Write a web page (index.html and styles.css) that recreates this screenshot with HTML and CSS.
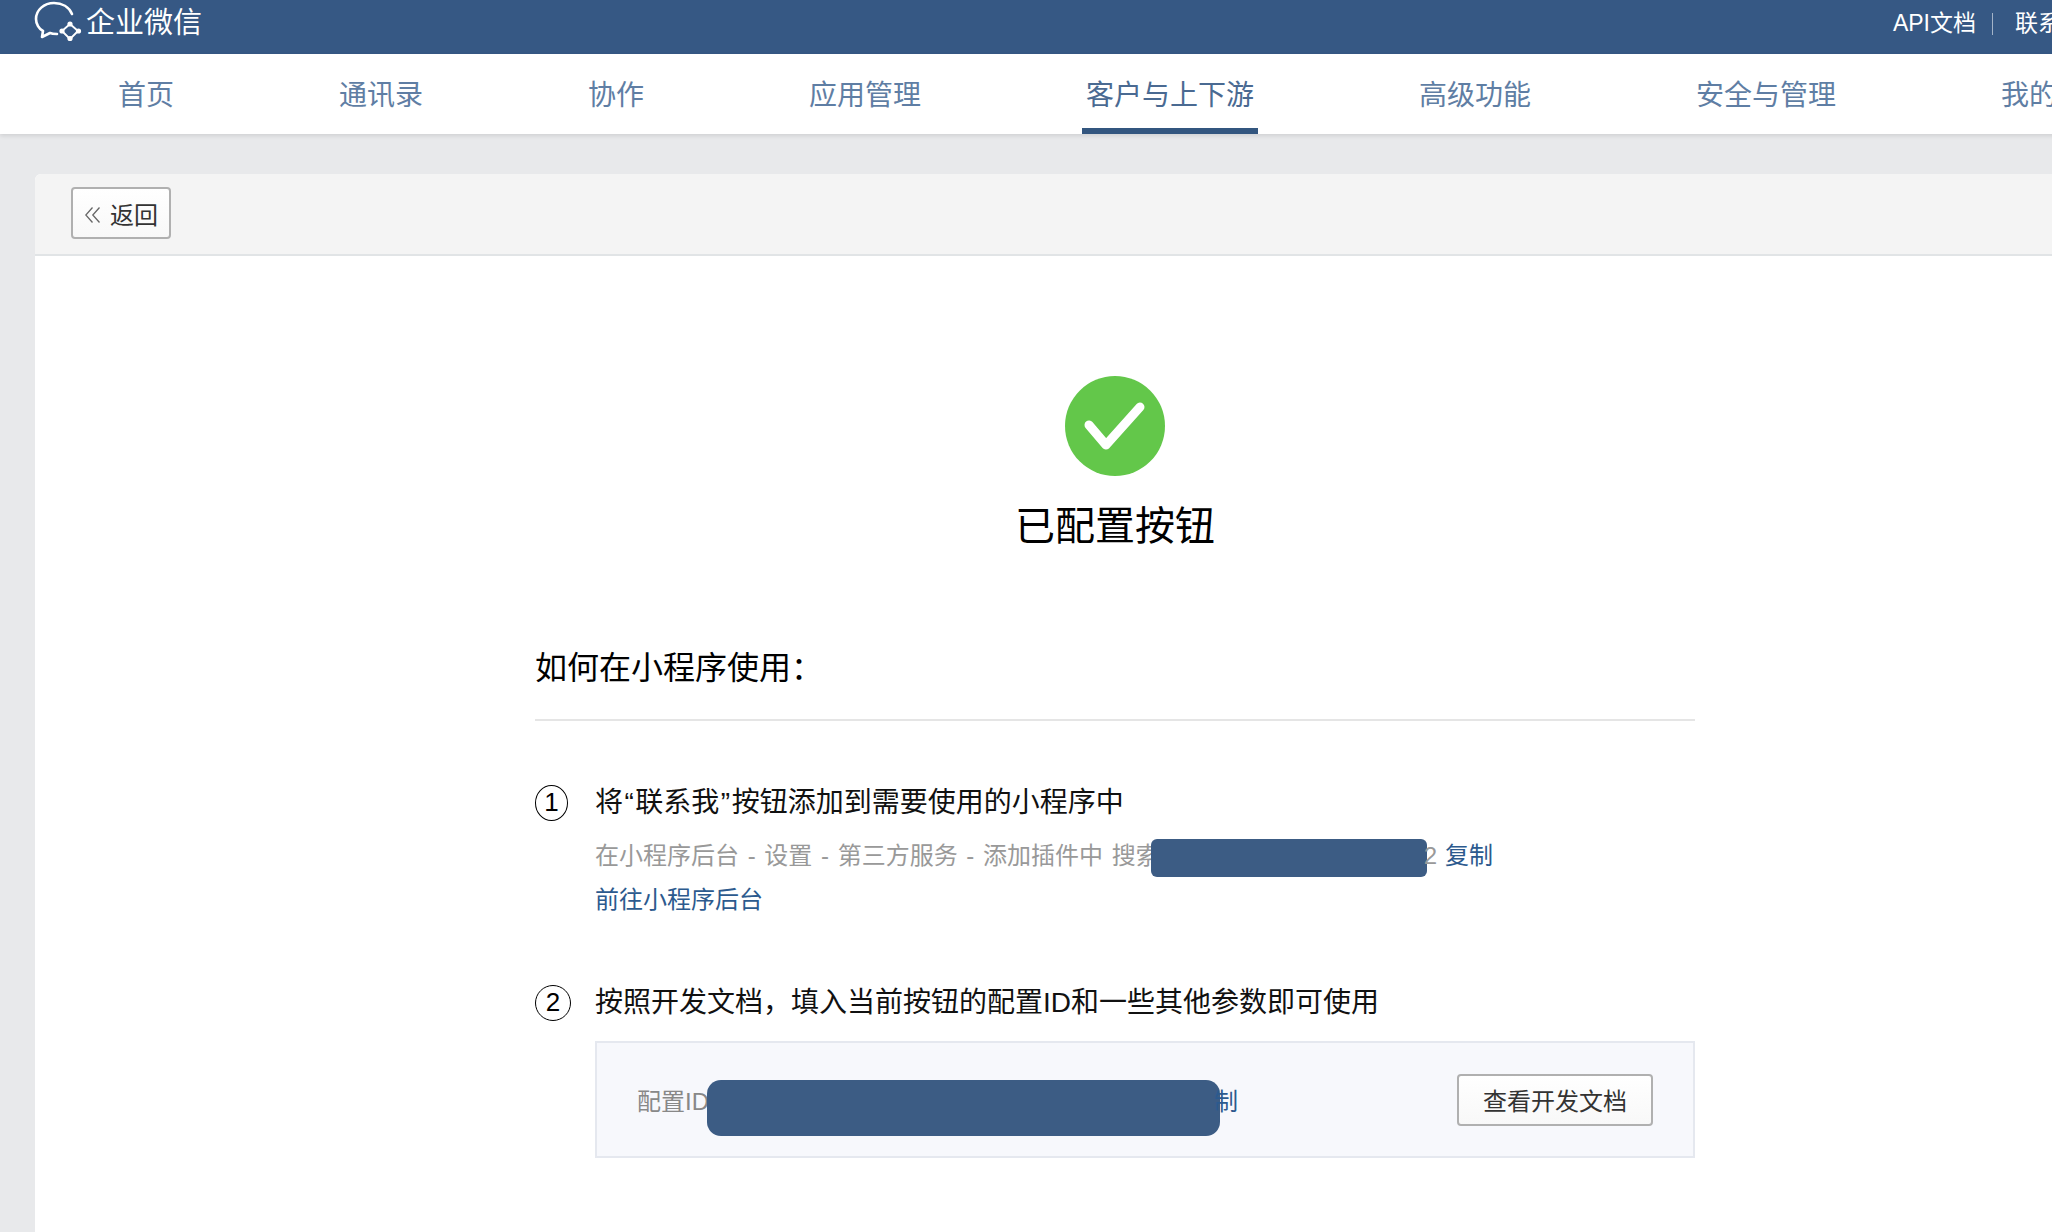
FILE: index.html
```html
<!DOCTYPE html>
<html lang="zh-CN">
<head>
<meta charset="utf-8">
<title>企业微信</title>
<link rel="stylesheet" href="styles.css">
</head>
<body>
<div class="page">
  <header class="topbar">
    <a class="brand">
      <svg class="brand-icon" viewBox="0 0 50 42" width="50" height="42" aria-hidden="true">
        <path class="logo-line" d="M39 14C36 7 29 3 21 3 11 3 3 10 3 19c0 5 3 10 7 12l-1 6 8-4c2 1 5 1 7 1"/>
        <path class="logo-thin" d="M37 24l8 7-8 8-8-8z"/>
        <circle class="logo-dot" cx="37" cy="24" r="2.6"/>
        <circle class="logo-dot" cx="45.5" cy="31" r="2.6"/>
        <circle class="logo-dot" cx="37" cy="38.5" r="2.6"/>
        <circle class="logo-dot" cx="29" cy="31" r="2.6"/>
      </svg>
      <span class="brand-name">企业微信</span>
    </a>
    <nav class="toplinks">
      <a>API文档</a>
      <i class="toplinks-sep"></i>
      <a>联系我们</a>
    </nav>
  </header>

  <nav class="mainnav">
    <a class="nav-item">首页</a>
    <a class="nav-item">通讯录</a>
    <a class="nav-item">协作</a>
    <a class="nav-item">应用管理</a>
    <a class="nav-item is-active">客户与上下游</a>
    <a class="nav-item">高级功能</a>
    <a class="nav-item">安全与管理</a>
    <a class="nav-item">我的企业</a>
  </nav>

  <main class="stage">
    <section class="card">
      <div class="toolbar">
        <button class="btn btn-back" type="button">
          <svg viewBox="0 0 15 16" width="15" height="16" aria-hidden="true"><path class="chev" d="M7.5 0.5L0.8 8l6.7 7.5M14.5 0.5L7.8 8l6.7 7.5"/></svg>
          <span>返回</span>
        </button>
      </div>

      <div class="content">
        <div class="result">
          <svg class="result-icon" viewBox="0 0 100 100" width="100" height="100" aria-hidden="true">
            <circle cx="50" cy="50" r="50" fill="#63c74a"/>
            <path d="M24 49l17 20 34-38" fill="none" stroke="#fff" stroke-width="9" stroke-linecap="round" stroke-linejoin="round"/>
          </svg>
          <h1 class="result-title">已配置按钮</h1>
        </div>

        <h2 class="guide-title">如何在小程序使用：</h2>

        <ol class="steps">
          <li class="step step-first">
            <span class="step-num">1</span>
            <div class="step-body">
              <h3 class="step-title">将<span class="quote">“</span>联系我<span class="quote">”</span>按钮添加到需要使用的小程序中</h3>
              <p class="step-line step-desc">在小程序后台 - 设置 - 第三方服务 - 添加插件中 搜索<span class="secret secret-plugin"></span>2<a class="link link-copy">复制</a></p>
              <p class="step-line"><a class="link">前往小程序后台</a></p>
            </div>
          </li>
          <li class="step step-second">
            <span class="step-num step-num-wide">2</span>
            <div class="step-body">
              <h3 class="step-title">按照开发文档，填入当前按钮的配置ID和一些其他参数即可使用</h3>
              <div class="config-box">
                <div class="config-id"><span>配置ID</span><span class="secret secret-config"></span><a class="link">制</a></div>
                <button class="btn btn-doc" type="button">查看开发文档</button>
              </div>
            </div>
          </li>
        </ol>
      </div>
    </section>
  </main>
</div>
</body>
</html>
```

FILE: styles.css
```css
html, body {
  margin: 0;
  height: 100%;
  overflow: hidden;
}
body {
  font-family: "Liberation Sans", "Noto Sans CJK SC", sans-serif;
  color: #000;
  background: #e8e9eb;
}
h1, h2, h3, p, ol {
  margin: 0;
  padding: 0;
  font-weight: 400;
}
ol { list-style: none; }

.page {
  width: 2200px;
  height: 1232px;
  display: flex;
  flex-direction: column;
}

/* top bar */
.topbar {
  height: 54px;
  flex: none;
  display: flex;
  align-items: flex-start;
  justify-content: space-between;
  padding: 0 93px 0 33px;
  background: #365884;
  color: #fff;
}
.brand {
  display: flex;
  align-items: flex-start;
  gap: 3px;
}
.brand-icon { display: block; }
.brand-name {
  font-size: 29px;
  line-height: 46px;
}
.logo-line, .logo-thin {
  fill: none;
  stroke: #fff;
  stroke-linecap: round;
  stroke-linejoin: round;
}
.logo-line { stroke-width: 2.6; }
.logo-thin { stroke-width: 1.8; }
.logo-dot { fill: #fff; }
.toplinks {
  display: flex;
  align-items: center;
  height: 42px;
  font-size: 23px;
}
.toplinks-sep {
  width: 1px;
  height: 22px;
  margin: 5px 22px 0 16px;
  background: #a3b3c8;
}

/* main navigation */
.mainnav {
  position: relative;
  z-index: 1;
  height: 80px;
  flex: none;
  display: flex;
  gap: 157px;
  padding-left: 114px;
  background: #fff;
  box-shadow: 0 2px 4px rgba(0, 0, 0, .1);
}
.nav-item {
  height: 80px;
  padding: 0 4px;
  font-size: 28px;
  line-height: 83px;
  color: #5f7ea4;
  white-space: nowrap;
}
.nav-item.is-active {
  color: #4a6a92;
  box-shadow: inset 0 -6px 0 #33567f;
}

/* card */
.stage {
  flex: 1;
  padding: 40px 0 0 35px;
}
.card {
  width: 2160px;
  height: 100%;
  border-radius: 6px 6px 0 0;
  background: #fff;
}
.toolbar {
  box-sizing: border-box;
  height: 82px;
  display: flex;
  align-items: center;
  padding: 0 36px 2px;
  border-bottom: 2px solid #e1e4e6;
  border-radius: 6px 6px 0 0;
  background: #f4f4f4;
}

.btn {
  box-sizing: border-box;
  height: 52px;
  display: flex;
  align-items: center;
  border: 2px solid #b0b0b0;
  border-radius: 4px;
  background: linear-gradient(#fff, #f8f8f8);
  font: inherit;
  font-size: 24px;
  color: #333;
}
.btn-back {
  width: 100px;
  gap: 10px;
  padding: 0 0 0 12px;
}
.btn-back svg { margin-top: 3px; }
.chev {
  fill: none;
  stroke: #666;
  stroke-width: 1.3;
}

/* content */
.content {
  width: 1160px;
  margin: 0 auto;
  padding-top: 120px;
}
.result {
  display: flex;
  flex-direction: column;
  align-items: center;
}
.result-icon { display: block; }
.result-title {
  margin-top: 22px;
  font-size: 40px;
  line-height: 56px;
}
.guide-title {
  margin-top: 90px;
  padding-bottom: 27px;
  border-bottom: 2px solid #e5e5e5;
  font-size: 32px;
  line-height: 48px;
}

.step { display: flex; }
.step-first { margin-top: 62px; }
.step-second { margin-top: 61px; }
.step-num {
  box-sizing: border-box;
  flex: none;
  width: 33px;
  height: 36px;
  margin: 2px 27px 0 0;
  border: 1.5px solid #000;
  border-radius: 50%;
  font-size: 26px;
  line-height: 33px;
  text-align: center;
}
.step-num-wide {
  width: 36px;
  margin-right: 24px;
}
.step-body { flex: 1; min-width: 0; }
.step-title {
  font-size: 28px;
  line-height: 40px;
  color: #111;
}
.quote { margin: 0 1.5px; }
.step-line {
  font-size: 24px;
  line-height: 44px;
}
.step-desc {
  margin-top: 11px;
  color: #999;
  word-spacing: 2px;
}
.link { color: #2c5a8e; }
.link-copy { margin-left: 8px; }

.secret {
  display: inline-block;
  background: #3c5c84;
  vertical-align: middle;
}
.secret-plugin {
  width: 276px;
  height: 38px;
  margin-left: -9px;
  margin-right: -3px;
  border-radius: 6px;
}
.config-box {
  box-sizing: border-box;
  height: 117px;
  margin-top: 18px;
  display: flex;
  align-items: center;
  justify-content: space-between;
  padding: 0 40px;
  border: 2px solid #e5e8ef;
  background: #f7f8fc;
}
.config-id {
  display: flex;
  align-items: center;
  font-size: 24px;
  color: #888;
}
.secret-config {
  width: 513px;
  height: 56px;
  margin-top: 17px;
  margin-left: -2px;
  border-radius: 14px;
}
.config-id .link { margin-left: -6px; }
.btn-doc {
  width: 196px;
  justify-content: center;
  padding: 0;
}
```
